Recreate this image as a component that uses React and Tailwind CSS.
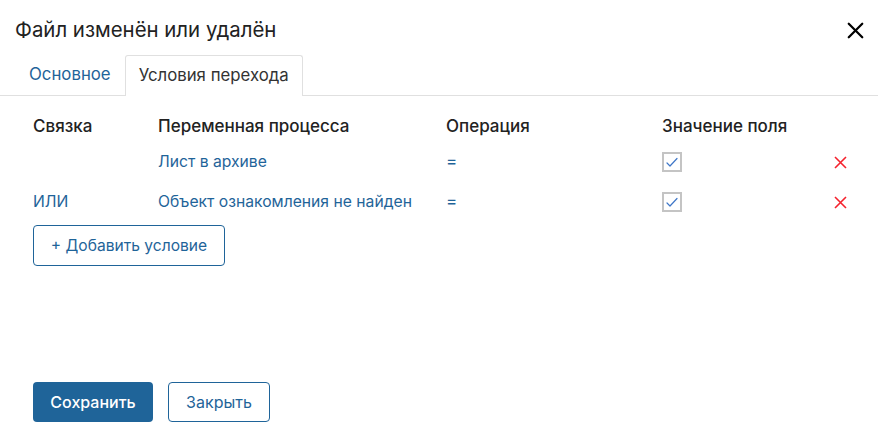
import { X } from "lucide-react";

const BLUE = "#1f6499";

const rows = [
  { join: "", variable: "Лист в архиве", op: "=" },
  { join: "ИЛИ", variable: "Объект ознакомления не найден", op: "=" },
];

function CheckBox() {
  return (
    <div className="w-[20px] h-[20px] border-2 border-[#c4c4c4] bg-white flex items-center justify-center">
      <svg width="14" height="12" viewBox="0 0 14 12" fill="none">
        <path d="M2 7l3 3 7-7.5" stroke="#3f77c8" strokeWidth="1.2" strokeLinecap="round" strokeLinejoin="round" />
      </svg>
    </div>
  );
}

export default function App() {
  return (
    <div
      className="w-[878px] h-[429px] bg-white flex flex-col text-[#222]"
      style={{ fontFamily: "Inter, 'Noto Sans', sans-serif" }}
    >
      {/* header */}
      <div className="flex items-center justify-between pl-[15px] pr-[9px] pt-[15px] h-[46px]">
        <h1 className="text-[20.4px] leading-none font-normal text-[#222]">Файл изменён или удалён</h1>
        <button className="w-[28px] h-[28px] flex items-center justify-center text-black">
          <X className="w-[27px] h-[27px]" strokeWidth={2} />
        </button>
      </div>

      {/* tabs */}
      <div className="flex mt-[9px] pl-[15px] border-b border-[#e0e0e0] h-[41px]">
        <div className="px-[14px] flex items-center text-[16.8px] text-[#1f6499]">Основное</div>
        <div className="px-[13px] flex items-center text-[16.8px] text-[#333] border border-b-0 border-[#e0e0e0] rounded-t-[3px] bg-white -mb-px">
          Условия перехода
        </div>
      </div>

      {/* table */}
      <div className="pl-[33px] pr-[30px] pt-[16px]">
        <div className="grid grid-cols-[125px_288px_216px_172px_1fr] items-center h-[30px] text-[17px] font-medium text-[#222]">
          <span>Связка</span>
          <span>Переменная процесса</span>
          <span>Операция</span>
          <span>Значение поля</span>
          <span />
        </div>
        {rows.map((row, i) => (
          <div
            key={i}
            className="grid grid-cols-[125px_288px_216px_172px_1fr] items-center h-[40px] text-[15.7px]"
            style={{ color: BLUE }}
          >
            <span>{row.join}</span>
            <span>{row.variable}</span>
            <span className="text-[17px]">{row.op}</span>
            <span><CheckBox /></span>
            <span className="flex">
              <svg width="13" height="13" viewBox="0 0 13 13" fill="none">
                <path d="M1 1l11 11M12 1L1 12" stroke="#f5222d" strokeWidth="1.6" />
              </svg>
            </span>
          </div>
        ))}
        <button className="mt-[3px] w-[192px] h-[41px] border border-[#1f6499] rounded-[4px] text-[15.6px] text-[#1f6499] flex items-center justify-center">
          + Добавить условие
        </button>
      </div>

      {/* footer */}
      <div className="flex gap-[15px] pl-[33px] mt-auto mb-[7px]">
        <button className="w-[120px] h-[40px] rounded-[4px] bg-[#1f6499] text-white text-[16px] font-medium">
          Сохранить
        </button>
        <button className="w-[102px] h-[40px] rounded-[4px] border border-[#1f6499] text-[#1f6499] text-[16px] bg-white">
          Закрыть
        </button>
      </div>
    </div>
  );
}
